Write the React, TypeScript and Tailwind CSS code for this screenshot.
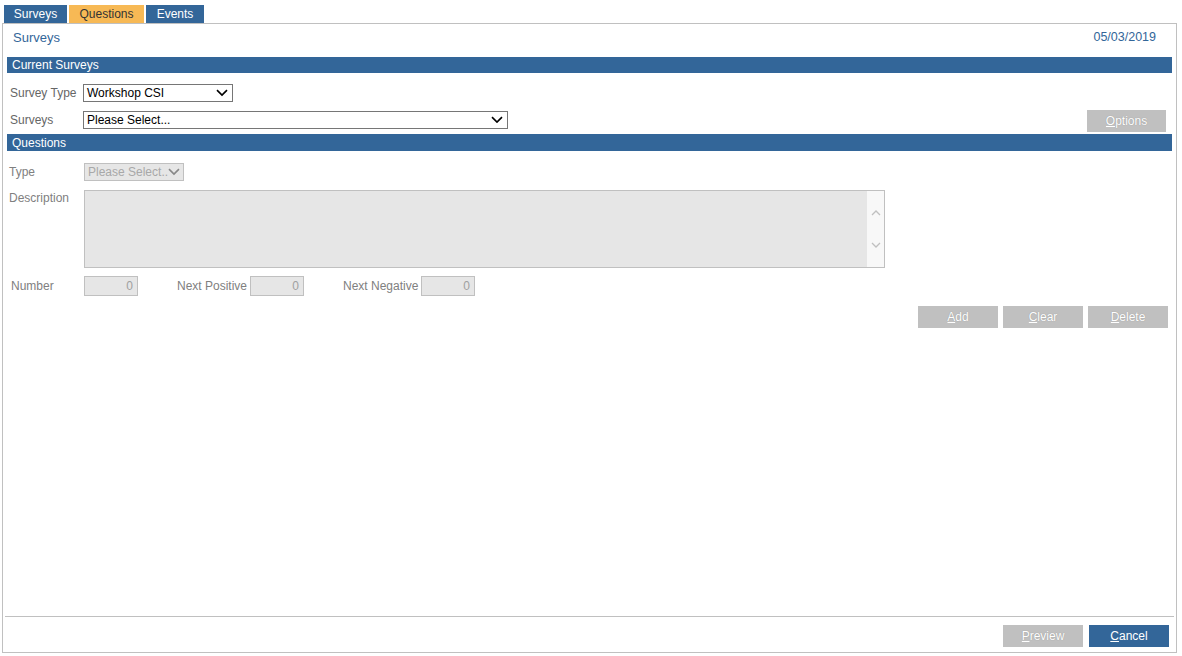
import React from "react";

const Chevron = ({ color = "#000", w = 12 }: { color?: string; w?: number }) => (
  <svg width={w} height={w * 0.6} viewBox="0 0 12 7" fill="none">
    <path d="M1 1l5 5 5-5" stroke={color} strokeWidth="1.6" />
  </svg>
);

const Select = ({ text, w }: { text: string; w: string }) => (
  <div className={`${w} h-[18px] border border-[#767676] bg-white flex items-center justify-between pl-[3px] pr-[4px] text-black`}>
    <span className="whitespace-nowrap">{text}</span>
    <Chevron />
  </div>
);

const GrayBtn = ({ first, rest, w = "w-[80px]" }: { first: string; rest: string; w?: string }) => (
  <div className={`${w} h-[22px] bg-[#c0c0c0] flex items-center justify-center text-white [text-shadow:0_0_1px_#8a8a8a]`}>
    <span className="underline">{first}</span>
    <span>{rest}</span>
  </div>
);

const NumInput = () => (
  <div className="w-[54px] h-[20px] border border-[#c0c0c0] bg-[#e6e6e6] flex items-center justify-end pr-[4px] text-[#a0a0a0]">0</div>
);

export default function App() {
  return (
    <div className="w-[1182px] h-[656px] bg-white text-[12px] font-['Liberation_Sans',Arial,sans-serif] leading-none">
      <div className="flex gap-[2px] pl-[4px] pt-[5px]">
        <div className="w-[63px] h-[18px] bg-[#336699] text-white flex items-center justify-center">Surveys</div>
        <div className="w-[75px] h-[18px] bg-[#f7b955] text-[#333] flex items-center justify-center">Questions</div>
        <div className="w-[58px] h-[18px] bg-[#336699] text-white flex items-center justify-center">Events</div>
      </div>
      <div className="ml-[2px] w-[1175px] h-[630px] border border-[#c0c0c0] flex flex-col">
        <div className="h-[33px] flex items-start justify-between pl-[10px] pr-[20px] pt-[7px] text-[#336699]">
          <span className="text-[13px]">Surveys</span>
          <span className="text-[12.5px]">05/03/2019</span>
        </div>
        <div className="mx-[4px] h-[16px] bg-[#336699] text-white flex items-center pl-[5px]">Current Surveys</div>
        <div className="flex items-center mt-[11px] text-[#666]">
          <span className="w-[80px] pl-[7px]">Survey Type</span>
          <Select text="Workshop CSI" w="w-[150px]" />
        </div>
        <div className="flex items-center mt-[8px] h-[19px] text-[#666]">
          <span className="w-[80px] pl-[7px]">Surveys</span>
          <Select text="Please Select..." w="w-[425px]" />
          <div className="ml-auto mr-[10px] mt-[2px]">
            <GrayBtn first="O" rest="ptions" w="w-[79px]" />
          </div>
        </div>
        <div className="mx-[4px] mt-[5px] h-[17px] bg-[#336699] text-white flex items-center pl-[5px]">Questions</div>
        <div className="flex items-center mt-[12px] text-[#808080]">
          <span className="w-[81px] pl-[6px]">Type</span>
          <div className="w-[100px] h-[18px] border border-[#c0c0c0] bg-[#e6e6e6] flex items-center justify-between pl-[3px] pr-[3px] text-[#a8a8a8] overflow-hidden">
            <span className="whitespace-nowrap">Please Select..</span>
            <Chevron color="#888" />
          </div>
        </div>
        <div className="flex items-start mt-[9px] text-[#808080]">
          <span className="w-[81px] pl-[6px] pt-[2px]">Description</span>
          <div className="w-[801px] h-[78px] border border-[#c0c0c0] bg-[#e6e6e6] flex justify-end">
            <div className="w-[17px] h-full bg-[#f8f8f8] flex flex-col items-center justify-center gap-[26px]">
              <svg width="10" height="6" viewBox="0 0 10 6" fill="none"><path d="M1 5l4-4 4 4" stroke="#c0c0c0" strokeWidth="1.3" /></svg>
              <svg width="10" height="6" viewBox="0 0 10 6" fill="none"><path d="M1 1l4 4 4-4" stroke="#c0c0c0" strokeWidth="1.3" /></svg>
            </div>
          </div>
        </div>
        <div className="flex items-center mt-[8px] text-[#808080]">
          <span className="w-[81px] pl-[8px]">Number</span>
          <NumInput />
          <span className="w-[112px] pl-[39px]">Next Positive</span>
          <NumInput />
          <span className="w-[117px] pl-[39px]">Next Negative</span>
          <NumInput />
        </div>
        <div className="flex justify-end gap-[5px] mt-[10px] mr-[8px]">
          <GrayBtn first="A" rest="dd" />
          <GrayBtn first="C" rest="lear" />
          <GrayBtn first="D" rest="elete" />
        </div>
        <div className="flex-1" />
        <div className="mx-[2px] border-t border-[#c0c0c0]" />
        <div className="flex justify-end gap-[6px] mt-[8px] mb-[5px] mr-[7px]">
          <GrayBtn first="P" rest="review" />
          <div className="w-[80px] h-[22px] bg-[#336699] flex items-center justify-center text-white">
            <span className="underline">C</span>
            <span>ancel</span>
          </div>
        </div>
      </div>
    </div>
  );
}
